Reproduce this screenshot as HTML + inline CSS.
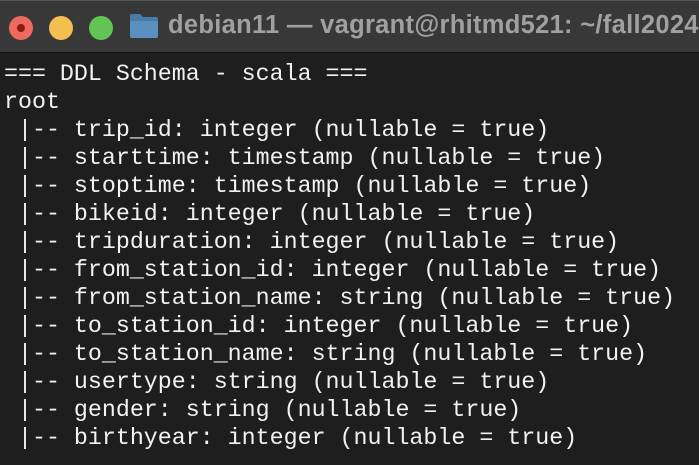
<!DOCTYPE html>
<html><head><meta charset="utf-8"><style>
html,body{margin:0;padding:0;width:699px;height:465px;overflow:hidden;background:#1e1e1e;}
.bar{position:absolute;left:0;top:0;width:699px;height:53px;background:#383838;border-bottom:1px solid #111;border-top:1px solid #555;box-sizing:border-box;}
.c{position:absolute;top:15px;width:24px;height:24px;border-radius:50%;}
.title{position:absolute;left:168px;top:10px;font:bold 25.5px "Liberation Sans",sans-serif;color:#a0a0a0;white-space:nowrap;letter-spacing:0.3px;}
pre{position:absolute;left:4px;top:60px;margin:0;font:23.3px/28px "Liberation Mono","DejaVu Sans Mono",monospace;color:#f2f2f2;}
</style></head><body>
<div class="bar">
<div class="c" style="left:9px;background:#ee6a5e"><div style="position:absolute;left:8px;top:8px;width:8px;height:8px;border-radius:50%;background:#8c1a10"></div></div>
<div class="c" style="left:49px;background:#f5bf4f"></div>
<div class="c" style="left:89px;background:#61c454"></div>
<svg style="position:absolute;left:129px;top:12px" width="30" height="26" viewBox="0 0 30 26"><path d="M1 3 Q1 1 3 1 H11 L14 4 H27 Q29 4 29 6 V23 Q29 25 27 25 H3 Q1 25 1 23 Z" fill="#4a7ba8"/><rect x="1" y="8" width="28" height="17" rx="2" fill="#5a8fc0"/></svg>
<div class="title">debian11 — vagrant@rhitmd521: ~/fall2024</div>
</div>
<pre>=== DDL Schema - scala ===
root
 |-- trip_id: integer (nullable = true)
 |-- starttime: timestamp (nullable = true)
 |-- stoptime: timestamp (nullable = true)
 |-- bikeid: integer (nullable = true)
 |-- tripduration: integer (nullable = true)
 |-- from_station_id: integer (nullable = true)
 |-- from_station_name: string (nullable = true)
 |-- to_station_id: integer (nullable = true)
 |-- to_station_name: string (nullable = true)
 |-- usertype: string (nullable = true)
 |-- gender: string (nullable = true)
 |-- birthyear: integer (nullable = true)</pre>
</body></html>
